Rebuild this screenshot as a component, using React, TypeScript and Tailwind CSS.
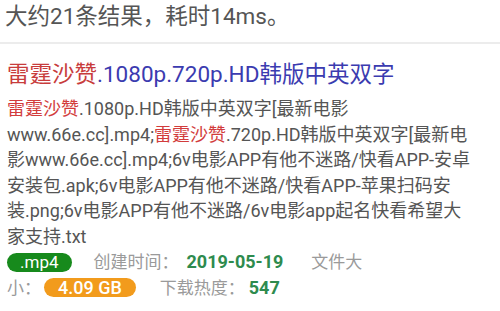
export default function App() {
  const hl = 'text-[#d23c3c]';
  return (
    <div
      className="w-[500px] h-[311px] overflow-hidden bg-white"
      style={{ fontFamily: 'Roboto, "Noto Sans CJK SC", sans-serif' }}
    >
      <div className="px-[5px] pt-[2px] h-[42px] text-[22.5px] leading-[28px] text-[#555]">
        大约21条结果，耗时14ms。
      </div>
      <div className="h-[2px] bg-[#ececec]" />

      <div className="px-[7px] pt-[15px]">
        <div className="text-[22.5px] leading-[30px] text-[#3b3bb0]">
          <span className="text-[#c83c3c]">雷霆沙赞</span>.1080p.720p.HD韩版中英双字
        </div>

        <div className="mt-[7px] text-[18px] leading-[25.5px] text-[#555]">
          <span className={hl}>雷霆沙赞</span>.1080p.HD韩版中英双字[最新电影
          <br />
          www.66e.cc].mp4;<span className={hl}>雷霆沙赞</span>.720p.HD韩版中英双字[最新电
          <br />
          影www.66e.cc].mp4;6v电影APP有他不迷路/快看APP-安卓
          <br />
          安装包.apk;6v电影APP有他不迷路/快看APP-苹果扫码安
          <br />
          装.png;6v电影APP有他不迷路/6v电影app起名快看希望大
          <br />
          家支持.txt
        </div>

        <div className="text-[17px] leading-[25px] text-[#9a9a9a]">
          <span className="inline-block rounded-full bg-[#178a1c] px-[13px] leading-[19px] text-white">
            .mp4
          </span>
          <span className="ml-[22px]">创建时间：</span>
          <span className="ml-[8px] font-bold text-[18px] text-[#2e8b4e]">2019-05-19</span>
          <span className="ml-[28px]">文件大</span>
          <br />
          <span>小：</span>
          <span className="ml-[3px] inline-block rounded-full bg-[#f29b1c] px-[14px] text-[18px] font-medium leading-[19px] text-white">
            4.09 GB
          </span>
          <span className="ml-[24px]">下载热度：</span>
          <span className="ml-[4px] font-bold text-[18px] text-[#2e8b4e]">547</span>
        </div>
      </div>
    </div>
  );
}
